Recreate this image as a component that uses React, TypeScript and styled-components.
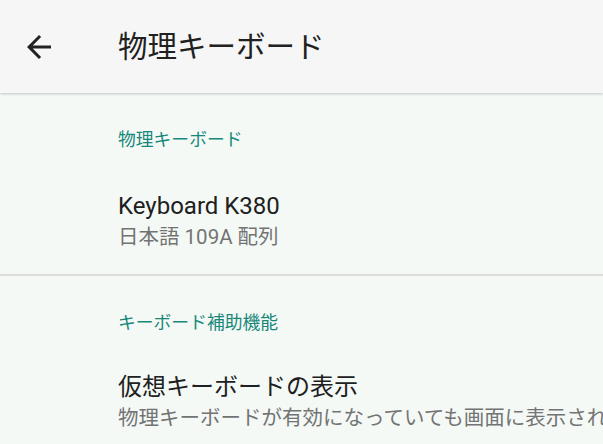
import React from 'react';
import styled, { createGlobalStyle } from 'styled-components';

const GlobalStyle = createGlobalStyle`
  html, body {
    margin: 0;
    padding: 0;
    background: #f4f9f6;
    overflow: hidden;
  }
  body {
    font-family: Roboto, "Noto Sans CJK JP", sans-serif;
  }
`;

const Screen = styled.div`
  width: 603px;
  height: 444px;
  background: #f4f9f6;
  overflow: hidden;
`;

const AppBar = styled.header`
  position: relative;
  z-index: 1;
  height: 93px;
  display: flex;
  align-items: center;
  background: #f6f6f6;
  box-shadow: 0 1px 2px rgba(0, 0, 0, 0.14), 0 2px 3px rgba(0, 0, 0, 0.05);
`;

const BackButton = styled.button`
  width: 36px;
  height: 36px;
  margin-left: 21px;
  padding: 0;
  border: none;
  background: none;
  display: flex;
  align-items: center;
  justify-content: center;
  color: #222;
`;

const Title = styled.h1`
  margin: 0 0 0 61px;
  font-size: 29.5px;
  font-weight: 400;
  color: #212121;
  line-height: 36px;
`;

const Category = styled.div`
  padding: 35px 0 0 118px;
  font-size: 17.8px;
  line-height: 24px;
  color: #17877a;
`;

const Item = styled.div<{ $divider?: boolean }>`
  padding: ${(p) => (p.$divider ? '39px 0 22px 118px' : '37px 0 0 118px')};
  border-bottom: ${(p) => (p.$divider ? '2px solid #dcdcdc' : 'none')};
`;

const ItemTitle = styled.div`
  font-size: 24px;
  line-height: 30px;
  color: #202020;
  white-space: nowrap;
`;

const ItemSummary = styled.div`
  font-size: 20.5px;
  line-height: 30px;
  margin-top: 1px;
  color: #737373;
  white-space: nowrap;
  overflow: hidden;
`;

function BackArrow() {
  return (
    <svg width="36" height="36" viewBox="0 0 24 24" fill="currentColor">
      <path d="M20 11H7.83l5.59-5.59L12 4l-8 8 8 8 1.41-1.41L7.83 13H20v-2z" />
    </svg>
  );
}

export default function App() {
  return (
    <Screen>
      <GlobalStyle />
      <AppBar>
        <BackButton aria-label="戻る">
          <BackArrow />
        </BackButton>
        <Title>物理キーボード</Title>
      </AppBar>
      <Category>物理キーボード</Category>
      <Item $divider>
        <ItemTitle>Keyboard K380</ItemTitle>
        <ItemSummary>日本語 109A 配列</ItemSummary>
      </Item>
      <Category>キーボード補助機能</Category>
      <Item>
        <ItemTitle>仮想キーボードの表示</ItemTitle>
        <ItemSummary>物理キーボードが有効になっていても画面に表示されます</ItemSummary>
      </Item>
    </Screen>
  );
}
